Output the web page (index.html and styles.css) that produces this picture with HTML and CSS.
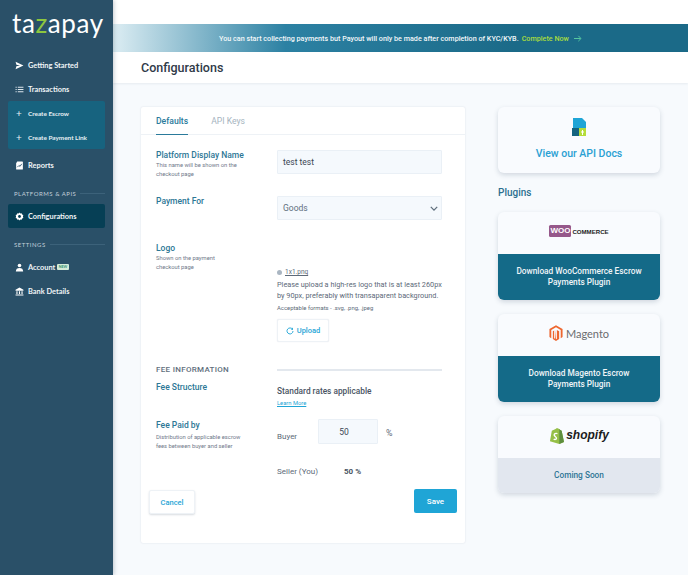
FILE: index.html
```html
<!DOCTYPE html>
<html lang="en">
<head>
    <meta charset="UTF-8">
    <meta name="viewport" content="width=device-width, initial-scale=1.0">
    <title>Configurations</title>
    <link rel="stylesheet" href="styles.css">
</head>
<body>
    <aside class="sidebar">
        <div class="logo">ta<span class="logo-z">z</span>apay</div>
        <nav class="nav">
            <a class="nav-item">
                <svg class="nav-icon" viewBox="0 0 16 16"><path d="M1 1.5 15 8 1 14.5 2.5 9.5 9 8 2.5 6.5z" fill="#fff"/></svg>
                Getting Started
            </a>
            <a class="nav-item">
                <svg class="nav-icon" viewBox="0 0 16 16"><path d="M1 3h2v2H1zM5 3h10v2H5zM1 7h2v2H1zM5 7h10v2H5zM1 11h2v2H1zM5 11h10v2H5z" fill="#dfe8ee"/></svg>
                Transactions
            </a>
            <div class="subnav">
                <a class="sub-item"><span class="plus">+</span>Create Escrow</a>
                <a class="sub-item"><span class="plus">+</span>Create Payment Link</a>
            </div>
            <a class="nav-item nav-reports">
                <svg class="nav-icon" viewBox="0 0 16 16"><path d="M4 1h9a1 1 0 0 1 1 1v12a1 1 0 0 1-1 1H3a1 1 0 0 1-1-1V4z" fill="#fff"/><path d="M4 11 7 8l2 1.5L12 5" stroke="#2a5068" stroke-width="1.5" fill="none"/></svg>
                Reports
            </a>
            <div class="nav-heading">PLATFORMS &amp; APIS</div>
            <a class="nav-item nav-active">
                <svg class="nav-icon" viewBox="0 0 16 16"><path d="M8 1l1.5 1.800 2.300-.5.800 2.300 2.200.9-.7 2.500.7 2.500-2.200.9-.8 2.300-2.300-.5L8 15l-1.500-1.800-2.300.5-.8-2.300-2.200-.9.7-2.500-.7-2.500 2.200-.9.8-2.300 2.300.5z" fill="#fff"/><circle cx="8" cy="8" r="2.500" fill="#063f55"/></svg>
                Configurations
            </a>
            <div class="nav-heading nav-heading-settings">SETTINGS</div>
            <a class="nav-item">
                <svg class="nav-icon" viewBox="0 0 16 16"><circle cx="8" cy="4.500" r="3.200" fill="#fff"/><path d="M1.500 15c0-4 2.500-6 6.500-6s6.500 2 6.500 6z" fill="#fff"/></svg>
                Account <span class="new-badge">NEW</span>
            </a>
            <a class="nav-item">
                <svg class="nav-icon" viewBox="0 0 16 16"><path d="M8 1 15 5v1.500H1V5zM2.500 7.500h2v5h-2zM7 7.500h2v5H7zM11.500 7.500h2v5h-2zM1 13.500h14V15H1z" fill="#fff"/></svg>
                Bank Details
            </a>
        </nav>
    </aside>

    <main class="main">
        <div class="topbar"></div>
        <div class="banner">
            You can start collecting payments but Payout will only be made after completion of KYC/KYB.
            <a class="banner-link">Complete Now</a>
            <svg class="banner-arrow" viewBox="0 0 12 10"><path d="M0 5h10M6.500 1 10.500 5 6.500 9" stroke="#55c6a0" stroke-width="1.500" fill="none"/></svg>
        </div>
        <header class="page-head"><h1>Configurations</h1></header>

        <div class="content">
            <section class="card">
                <div class="tabs">
                    <a class="tab tab-active">Defaults</a>
                    <a class="tab">API Keys</a>
                </div>

                <div class="row row-name">
                    <div class="row-label">
                        <div class="label">Platform Display Name</div>
                        <p class="hint">This name will be shown on the checkout page</p>
                    </div>
                    <div class="input-box">test test</div>
                </div>

                <div class="row row-payment">
                    <div class="label">Payment For</div>
                    <div class="input-box select-box">
                        Goods
                        <svg class="chevron" viewBox="0 0 10 6"><path d="M1 1l4 4 4-4" stroke="#5f6f7d" stroke-width="1.600" fill="none"/></svg>
                    </div>
                </div>

                <div class="row row-logo">
                    <div class="row-label">
                        <div class="label">Logo</div>
                        <p class="hint">Shown on the payment<br>checkout page</p>
                    </div>
                    <div class="logo-field">
                        <div class="file-name"><span class="file-dot"></span><u>1x1.png</u></div>
                        <p class="upload-text">Please upload a high-res logo that is at least 260px by 90px, preferably with transaparent background.</p>
                        <p class="formats">Acceptable formats - .svg, .png, .jpeg</p>
                        <button class="upload-btn">
                            <svg class="upload-icon" viewBox="0 0 12 12"><path d="M9.800 3.500A4.500 4.500 0 1 0 10.500 6" stroke="#1fa5d6" stroke-width="1.400" fill="none"/><path d="M10.500 .8v3.200H7.300z" fill="#1fa5d6"/></svg>
                            Upload
                        </button>
                    </div>
                </div>

                <div class="row row-fee-head">
                    <div class="fee-heading">FEE INFORMATION</div>
                    <div class="fee-line"></div>
                </div>

                <div class="row row-structure">
                    <div class="label">Fee Structure</div>
                    <div class="structure-field">
                        <div class="standard">Standard rates applicable</div>
                        <a class="learn-more">Learn More</a>
                    </div>
                </div>

                <div class="row row-paid">
                    <div class="row-label row-label-paid">
                        <div class="label">Fee Paid by</div>
                        <p class="hint">Distribution of applicable escrow fees between buyer and seller</p>
                    </div>
                    <div class="paid-field">
                        <div class="buyer-row">
                            <span class="party party-buyer">Buyer</span>
                            <div class="input-box percent-box">50</div>
                            <span class="percent">%</span>
                        </div>
                        <div class="seller-row">
                            <span class="party">Seller (You)</span>
                            <b class="seller-value">50 %</b>
                        </div>
                    </div>
                </div>

                <div class="actions">
                    <button class="cancel-btn">Cancel</button>
                    <button class="save-btn">Save</button>
                </div>
            </section>

            <aside class="side">
                <div class="docs-card">
                    <svg class="docs-icon" viewBox="0 0 14 18"><path d="M1 0h9l4 4v6H7v8H1z" fill="#1fa5d6"/><path d="M0 10h7v8H0z" fill="#15637f"/><path d="M7 10h7v8H7z" fill="#b5dc3a"/><path d="M10 12h1v5h-1zM9 13.500h3v1H9z" fill="#fff"/></svg>
                    <div class="docs-title">View our API Docs</div>
                </div>

                <h2 class="plugins-title">Plugins</h2>

                <div class="plugin">
                    <div class="plugin-logo">
                        <span class="woo-mark">WOO</span><span class="woo-text">COMMERCE</span>
                    </div>
                    <div class="plugin-action">Download WooCommerce Escrow Payments Plugin</div>
                </div>

                <div class="plugin">
                    <div class="plugin-logo">
                        <svg class="magento-icon" viewBox="0 0 16 18"><path d="M8 0 15.500 4.300v9.400l-2.100 1.200V5.500L8 2.400 2.600 5.500v9.400L.5 13.700V4.300z" fill="#ee672f"/><path d="M7 5.500v10.100l-1.100-.6V6l-1.500.9v9L8 18l3.600-2.100V6.900L9 5.500v10.100L8 16.200z" fill="#ee672f"/></svg>
                        <span class="magento-text">Magento</span>
                    </div>
                    <div class="plugin-action">Download Magento Escrow Payments Plugin</div>
                </div>

                <div class="plugin">
                    <div class="plugin-logo">
                        <svg class="shopify-icon" viewBox="0 0 16 18"><path d="M1 15 3 4l4-2 1.500-1L11 2l1 1 1.500 1L16 16l-5 2z" fill="#95bf47"/><path d="M11 2l1 1 1.500 1L16 16l-5 2z" fill="#5e8e3e"/><path d="M9 7c-2-.7-3.500.3-3.500 1.500S8 10.500 8 12s-2 1.500-3 .7" stroke="#fff" stroke-width="1.400" fill="none"/></svg>
                        <span class="shopify-text">shopify</span>
                    </div>
                    <div class="plugin-action plugin-soon">Coming Soon</div>
                </div>
            </aside>
        </div>
    </main>
</body>
</html>
```

FILE: styles.css
```css
* {
    box-sizing: border-box;
}
html, body {
    margin: 0;
    height: 575px;
    overflow: hidden;
}
body {
    display: flex;
    font-family: Roboto, "Noto Sans", sans-serif;
    background-color: #f7fafd;
    color: #3b4654;
}
p {
    margin: 0;
}

/* sidebar */
.sidebar {
    width: 113px;
    flex-shrink: 0;
    background-color: #2a5068;
    box-shadow: 1px 0 4px rgba(30, 50, 70, 0.25);
    padding: 0 8px;
    position: relative;
    z-index: 2;
}
.logo {
    font-family: Lato, sans-serif;
    font-size: 26px;
    font-weight: 400;
    line-height: 32px;
    letter-spacing: 0.6px;
    color: #fff;
    margin: 7px 0 0 4px;
}
.logo-z {
    color: #8cc63f;
}
.nav {
    margin-top: 14px;
}
.nav-item {
    display: flex;
    align-items: center;
    height: 24px;
    font-family: Lato, sans-serif;
    font-size: 7.4px;
    font-weight: 700;
    color: #f1f5f7;
    padding-left: 7px;
}
.nav-icon {
    width: 9px;
    height: 9px;
    margin-right: 4px;
    flex-shrink: 0;
}
.nav > .nav-item:first-child {
    margin-top: 2px;
}
.subnav {
    background-color: #17637f;
    border-radius: 2px;
    height: 48px;
    display: flex;
    flex-direction: column;
}
.sub-item {
    display: flex;
    align-items: center;
    height: 24px;
    font-family: Lato, sans-serif;
    font-size: 6.4px;
    font-weight: 700;
    color: #e8f0f4;
    padding-left: 8px;
}
.plus {
    width: 12px;
    font-size: 10px;
    font-weight: 400;
}
.nav-reports {
    margin-top: 4px;
}
.nav-heading {
    display: flex;
    align-items: center;
    gap: 4px;
    height: 12px;
    font-family: Lato, sans-serif;
    font-size: 6px;
    letter-spacing: 0.5px;
    color: #c1cfd9;
    margin: 10px 0 5px 6px;
}
.nav-heading::after {
    content: "";
    flex: 1;
    height: 1px;
    background-color: #3c627a;
}
.nav-active {
    background-color: #063f55;
    border-radius: 2px;
}
.nav-heading-settings {
    margin-top: 10px;
    margin-bottom: 5px;
}
.new-badge {
    font-size: 3.5px;
    background-color: #d5ecd9;
    color: #2c8a6e;
    padding: 1px 1.5px;
    margin-left: 2px;
    border-radius: 1px;
}

/* main */
.main {
    flex: 1;
    min-width: 0;
}
.topbar {
    height: 24px;
    background-color: #fff;
}
.banner {
    height: 28px;
    display: flex;
    align-items: center;
    justify-content: center;
    gap: 3px;
    font-size: 7.2px;
    font-weight: 500;
    color: #f3f8fa;
    white-space: nowrap;
    background: linear-gradient(90deg, #dcedf3 0, #2c81a3 30%, #1b6a88 70%, #1b6a88 100%);
}
.banner-link {
    color: #a9dd3e;
}
.banner-arrow {
    width: 8px;
    height: 7px;
    margin-left: 2px;
}
.page-head {
    height: 31px;
    background-color: #fff;
    box-shadow: 0 1px 2px rgba(40, 60, 90, 0.08);
    padding-left: 28px;
    display: flex;
    align-items: center;
}
h1 {
    margin: 0;
    font-size: 12.5px;
    font-weight: 500;
    color: #2f3a48;
}
.content {
    display: flex;
    gap: 33px;
    padding: 24px 28px 0;
}

/* form card */
.card {
    width: 324px;
    height: 436px;
    background-color: #fff;
    border-radius: 2px;
    box-shadow: 0 0 2px rgba(40, 60, 90, 0.14);
    flex-shrink: 0;
}
.tabs {
    display: flex;
    gap: 23px;
    height: 28px;
    padding-left: 15px;
    border-bottom: 1px solid #eef2f6;
}
.tab {
    font-size: 8.6px;
    color: #a6b4c0;
    padding-top: 9px;
}
.tab-active {
    font-weight: 500;
    color: #2a7a9b;
    border-bottom: 1px solid #2a7a9b;
    height: 28px;
}
.row {
    display: grid;
    grid-template-columns: 121px 165px;
    padding-left: 15px;
}
.label {
    font-size: 8.5px;
    font-weight: 500;
    line-height: 11px;
    color: #2d7796;
}
.hint {
    font-size: 5.8px;
    line-height: 8.6px;
    color: #70798a;
    width: 90px;
}
.input-box {
    height: 24px;
    background-color: #f5f9fd;
    border: 1px solid #eaf0f6;
    border-radius: 1px;
    display: flex;
    align-items: center;
    padding-left: 5px;
    font-size: 8.5px;
    color: #3b4654;
}
.row-name {
    padding-top: 15px;
}
.row-payment {
    padding-top: 18px;
}
.select-box {
    justify-content: space-between;
    padding-right: 3px;
    color: #5f6f7d;
}
.chevron {
    width: 8px;
    height: 5px;
}
.row-logo {
    padding-top: 23px;
}
.logo-field {
    padding-top: 24px;
}
.file-name {
    display: flex;
    align-items: center;
    gap: 3px;
    font-size: 6.5px;
    line-height: 11px;
    color: #5d6a79;
}
.file-dot {
    width: 5px;
    height: 5px;
    border-radius: 50%;
    background-color: #aab6c2;
}
.upload-text {
    font-size: 7.3px;
    line-height: 10.5px;
    color: #5d6a79;
    margin-top: 2px;
}
.formats {
    font-size: 5.9px;
    line-height: 8px;
    color: #5d6a79;
    margin-top: 3px;
}
.upload-btn {
    display: flex;
    align-items: center;
    justify-content: center;
    gap: 3px;
    width: 52px;
    height: 23px;
    margin-top: 7px;
    background-color: #fff;
    border: 1px solid #eef2f6;
    border-radius: 2px;
    box-shadow: 0 0 1px rgba(40, 60, 90, 0.15);
    font-family: inherit;
    font-size: 7.5px;
    font-weight: 500;
    color: #1fa5d6;
    padding: 0;
}
.upload-icon {
    width: 8px;
    height: 8px;
}
.row-fee-head {
    padding-top: 22px;
}
.fee-heading {
    font-size: 8px;
    font-weight: 500;
    letter-spacing: 0.3px;
    color: #5f6f7d;
    line-height: 12px;
}
.fee-line {
    height: 2px;
    margin-top: 5px;
    background-color: #e3e8ee;
}
.row-structure {
    padding-top: 5px;
}
.row-structure .label {
    padding-top: 1px;
}
.structure-field {
    padding-top: 4px;
}
.standard {
    font-size: 8.3px;
    font-weight: 500;
    line-height: 12px;
    color: #4a5564;
}
.learn-more {
    display: block;
    font-size: 5.8px;
    line-height: 8px;
    margin-top: 2px;
    color: #1fa5d6;
    text-decoration: underline;
}
.row-paid {
    padding-top: 12px;
}
.row-label-paid {
    padding-top: 1px;
}
.row-label-paid .hint {
    width: 92px;
    margin-top: 2px;
}
.buyer-row {
    display: flex;
    align-items: center;
    height: 25px;
}
.party {
    font-size: 8px;
    color: #5d6a79;
}
.party-buyer {
    width: 41px;
    padding-top: 10px;
}
.percent-box {
    width: 60px;
    height: 25px;
    justify-content: center;
    padding: 0 8px 0 0;
}
.percent {
    font-size: 8.8px;
    color: #5d6a79;
    margin-left: 8px;
    padding-top: 2px;
}
.seller-row {
    display: flex;
    align-items: center;
    margin-top: 20px;
    height: 14px;
}
.seller-row .party {
    width: 67px;
}
.seller-value {
    font-size: 8px;
    font-weight: 700;
    color: #4a5564;
}
.actions {
    display: flex;
    justify-content: space-between;
    align-items: flex-start;
    padding: 11px 8px 0;
}
.cancel-btn {
    width: 46px;
    height: 24px;
    margin-top: 1px;
    background-color: #fff;
    border: 1px solid #eef2f6;
    border-radius: 2px;
    box-shadow: 0 1px 2px rgba(40, 60, 90, 0.18);
    font-family: inherit;
    font-size: 7.5px;
    font-weight: 500;
    color: #1fa5d6;
    padding: 0;
}
.save-btn {
    width: 43px;
    height: 24px;
    background-color: #1fa5d6;
    border: none;
    border-radius: 2px;
    font-family: inherit;
    font-size: 8px;
    font-weight: 500;
    color: #fff;
    padding: 0;
}

/* right column */
.side {
    width: 162px;
    flex-shrink: 0;
}
.docs-card {
    height: 66px;
    background-color: #f9fbfe;
    border-radius: 6px;
    box-shadow: 0 2px 5px rgba(40, 60, 90, 0.18);
    display: flex;
    flex-direction: column;
    align-items: center;
    padding-top: 11px;
}
.docs-icon {
    width: 14px;
    height: 18px;
}
.docs-title {
    font-size: 10.5px;
    font-weight: 500;
    color: #2aa0d3;
    margin-top: 11px;
}
.plugins-title {
    margin: 13px 0 12px;
    font-size: 10px;
    font-weight: 500;
    line-height: 14px;
    color: #2c7090;
}
.plugin {
    border-radius: 6px;
    overflow: hidden;
    background-color: #f9fbfe;
    box-shadow: 0 2px 5px rgba(40, 60, 90, 0.18);
    margin-bottom: 14px;
}
.plugin-logo {
    height: 42px;
    padding-bottom: 4px;
    display: flex;
    align-items: center;
    justify-content: center;
}
.plugin-action {
    height: 46px;
    background-color: #146a88;
    display: flex;
    align-items: center;
    justify-content: center;
    text-align: center;
    padding: 0 12px;
    font-size: 8.3px;
    font-weight: 500;
    line-height: 11.3px;
    color: #f0f5f8;
}
.plugin-soon {
    height: 35px;
    background-color: #e2e7ef;
    color: #2f7696;
}
.woo-mark {
    font-family: "Liberation Sans", sans-serif;
    font-size: 8px;
    font-weight: 700;
    color: #fff;
    background-color: #96588a;
    border-radius: 1.5px;
    padding: 1px 1px;
    line-height: 10px;
}
.woo-text {
    font-family: "Liberation Sans", sans-serif;
    font-size: 6.1px;
    font-weight: 700;
    color: #1c1c1c;
    margin-left: 1px;
}
.magento-icon {
    width: 14px;
    height: 16px;
    margin-right: 3px;
}
.magento-text {
    font-family: Lato, sans-serif;
    font-size: 11px;
    font-weight: 400;
    color: #6b6b6e;
}
.shopify-icon {
    width: 15px;
    height: 17px;
    margin-right: 2px;
}
.shopify-text {
    font-family: "Liberation Sans", sans-serif;
    font-size: 12px;
    font-weight: 700;
    font-style: italic;
    color: #1c1c1c;
}
```
